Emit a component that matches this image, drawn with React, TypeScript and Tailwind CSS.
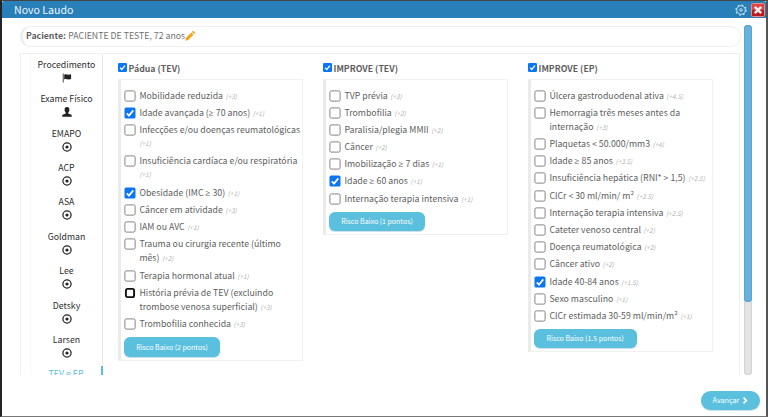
import React from 'react';

type Item = { lines: string[]; pts: string; on?: boolean; focus?: boolean; wrapPts?: boolean };
type Group = { title: string; items: Item[]; result: string; wide?: boolean };

const groups: Group[] = [
  {
    title: 'Pádua (TEV)',
    result: 'Risco Baixo (2 pontos)',
    items: [
      { lines: ['Mobilidade reduzida'], pts: '(+3)' },
      { lines: ['Idade avançada (≥ 70 anos)'], pts: '(+1)', on: true },
      { lines: ['Infecções e/ou doenças reumatológicas'], pts: '(+1)', wrapPts: true },
      { lines: ['Insuficiência cardíaca e/ou respiratória'], pts: '(+1)', wrapPts: true },
      { lines: ['Obesidade (IMC ≥ 30)'], pts: '(+1)', on: true },
      { lines: ['Câncer em atividade'], pts: '(+3)' },
      { lines: ['IAM ou AVC'], pts: '(+1)' },
      { lines: ['Trauma ou cirurgia recente (último', 'mês)'], pts: '(+2)' },
      { lines: ['Terapia hormonal atual'], pts: '(+1)' },
      { lines: ['História prévia de TEV (excluindo', 'trombose venosa superficial)'], pts: '(+3)', focus: true },
      { lines: ['Trombofilia conhecida'], pts: '(+3)' },
    ],
  },
  {
    title: 'IMPROVE (TEV)',
    result: 'Risco Baixo (1 pontos)',
    items: [
      { lines: ['TVP prévia'], pts: '(+3)' },
      { lines: ['Trombofilia'], pts: '(+2)' },
      { lines: ['Paralisia/plegia MMII'], pts: '(+2)' },
      { lines: ['Câncer'], pts: '(+2)' },
      { lines: ['Imobilização ≥ 7 dias'], pts: '(+1)' },
      { lines: ['Idade ≥ 60 anos'], pts: '(+1)', on: true },
      { lines: ['Internação terapia intensiva'], pts: '(+1)' },
    ],
  },
  {
    title: 'IMPROVE (EP)',
    result: 'Risco Baixo (1.5 pontos)',
    wide: true,
    items: [
      { lines: ['Úlcera gastroduodenal ativa'], pts: '(+4.5)' },
      { lines: ['Hemorragia três meses antes da', 'internação'], pts: '(+3)' },
      { lines: ['Plaquetas < 50.000/mm3'], pts: '(+4)' },
      { lines: ['Idade ≥ 85 anos'], pts: '(+3.5)' },
      { lines: ['Insuficiência hepática (RNI* > 1,5)'], pts: '(+2.5)' },
      { lines: ['ClCr < 30 ml/min/ m²'], pts: '(+2.5)' },
      { lines: ['Internação terapia intensiva'], pts: '(+2.5)' },
      { lines: ['Cateter venoso central'], pts: '(+2)' },
      { lines: ['Doença reumatológica'], pts: '(+2)' },
      { lines: ['Câncer ativo'], pts: '(+2)' },
      { lines: ['Idade 40-84 anos'], pts: '(+1.5)', on: true },
      { lines: ['Sexo masculino'], pts: '(+1)' },
      { lines: ['ClCr estimada 30-59 ml/min/m²'], pts: '(+1)' },
    ],
  },
];

const steps = ['Procedimento', 'Exame Físico', 'EMAPO', 'ACP', 'ASA', 'Goldman', 'Lee', 'Detsky', 'Larsen'];

function Check({ on, focus, small }: { on?: boolean; focus?: boolean; small?: boolean }) {
  return (
    <svg viewBox="0 0 12 12" className={small ? 'h-[9px] w-[9px] shrink-0' : 'h-3 w-3 shrink-0'}>
      {on ? (
        <>
          <rect x={small ? 0 : 0.5} y={small ? 0 : 0.5} width={small ? 12 : 11} height={small ? 12 : 11} rx="1.6" fill="#0a75f5" />
          <path d="M2.8 6.3 5 8.6 9.3 3.4" fill="none" stroke="#fff" strokeWidth="1.7" />
        </>
      ) : focus ? (
        <rect x="1.9" y="1.9" width="8.2" height="8.2" rx="1.6" fill="#fff" stroke="#111" strokeWidth="1.9" />
      ) : (
        <rect x="0.9" y="0.9" width="10.2" height="10.2" rx="1.5" fill="#fff" stroke="#777" strokeWidth="0.9" />
      )}
    </svg>
  );
}

function StepIcon({ index }: { index: number }) {
  if (index === 0)
    return (
      <svg viewBox="0 0 10 10" className="h-2.5 w-2.5" fill="#222">
        <path d="M.8.5h.8v9H.8zM2.2 1.7c2-1.3 3.4.9 6.9-.4v4.8c-3.5 1.3-4.9-.9-6.9.4z" />
      </svg>
    );
  if (index === 1)
    return (
      <svg viewBox="0 0 10 10" className="h-2.5 w-2.5" fill="#222">
        <path d="M5 .1c1.6 0 2.5 1.1 2.4 2.7 0 1.3-.6 2.2-1.1 2.8v1c.9.6 3.3.9 3.5 2.1v1H.2v-1c.2-1.2 2.6-1.5 3.5-2.1v-1C3.2 5 2.6 4.1 2.6 2.8 2.5 1.2 3.4.1 5 .1z" />
      </svg>
    );
  return (
    <svg viewBox="0 0 10 10" className="h-2.5 w-2.5">
      <circle cx="5" cy="5" r="4.1" fill="none" stroke="#222" strokeWidth="1.25" />
      <circle cx="5" cy="5" r="1.6" fill="#222" />
    </svg>
  );
}

/* The "≥" sign comes from a family that draws it with a flat foot. */
function Label({ text }: { text: string }) {
  const parts = text.split('≥');
  return (
    <>
      {parts[0]}
      {parts.length > 1 && (
        <>
          <span className="font-['Open_Sans',sans-serif] leading-none">≥</span>
          {parts[1]}
        </>
      )}
    </>
  );
}

function Panel({ g }: { g: Group }) {
  return (
    <section className="w-[185px] shrink-0">
      <div className="flex h-[17px] items-center">
        <Check on small />
        <span className="ml-[1.5px] pt-[2px] text-[8.75px] font-bold leading-[14px] text-[#606060]">{g.title}</span>
      </div>
      <div className="mt-[3px] rounded-[1px] border border-l-[3px] border-[#f0f0f0] border-l-[#ebebeb] pt-[8px] pb-[3px] pl-[3.4px]">
        {g.items.map((it) => (
          <div key={it.lines[0]} className={`flex ${it.lines.length > 1 || it.wrapPts ? 'h-[31.4px]' : 'h-[17.2px]'}`}>
            <div className="pt-[1.5px]">
              <Check on={it.on} focus={it.focus} />
            </div>
            <div className="ml-[3px] whitespace-nowrap pt-[0.5px] text-[8.78px] leading-[14.2px] text-[#606060]">
              {it.lines.map((line, i) => (
                <div key={line} className="h-[14.2px]">
                  <Label text={line} />
                  {i === it.lines.length - 1 && !it.wrapPts && (
                    <em className="ml-[2.5px] text-[6.4px] text-[#b0b0b0]">{it.pts}</em>
                  )}
                </div>
              ))}
              {it.wrapPts && <div className="h-[14.2px] text-[6.4px] italic text-[#b0b0b0]">{it.pts}</div>}
            </div>
          </div>
        ))}
        <div
          className={`mt-[3.3px] -ml-[0.4px] flex h-[19.5px] items-center justify-center rounded-[6px] bg-[#5bc0de] text-[7px] text-white shadow-[0_1px_1px_#c5dfe6] ${
            g.wide ? 'w-[102.5px]' : 'w-24'
          }`}
        >
          {g.result}
        </div>
      </div>
    </section>
  );
}

export default function App() {
  return (
    <div className="h-[417px] w-[768px] overflow-hidden border-t border-r-2 border-b border-l-2 border-t-[#454545] border-r-[#555] border-b-[#777] border-l-[#242229] bg-white font-['Noto_Sans_CJK_SC',sans-serif]">
      <header className="flex h-[17px] items-center justify-between rounded-t-[2px] bg-[#2980b9] pl-[12px] pr-px text-white">
        <h1 className="pb-px text-[10.6px] leading-[15px] text-[#eef6fb]">Novo Laudo</h1>
        <div className="flex items-center gap-1">
          <svg viewBox="0 0 12 12" className="h-3 w-3" fill="none" stroke="#d3e8f5">
            <circle cx="6" cy="6" r="4.3" strokeWidth="0.9" />
            <circle cx="6" cy="6" r="5.1" strokeWidth="1.1" strokeDasharray="1.7 2.305" />
            <circle cx="6" cy="6" r="1.3" strokeWidth="0.9" />
          </svg>
          <svg viewBox="0 0 14 14" className="h-[14px] w-[14px]">
            <rect x=".5" y=".5" width="13" height="13" rx="1" fill="#e04444" stroke="#e98b8b" />
            <rect x="1" y="7" width="12" height="6" fill="#b91a1a" />
            <path d="m3.8 3.8 6.4 6.4M10.2 3.8l-6.4 6.4" stroke="#eee" strokeWidth="2.5" />
          </svg>
        </div>
      </header>
      <main className="flex h-[357px] pt-[7px] pl-[18px]">
        <div className="flex h-[350px] w-[721px] flex-col overflow-hidden">
          <div className="mt-[1px] flex h-[21px] shrink-0 items-center rounded-[10px] border border-l-[3px] border-[#f0f0f0] border-l-[#ededed] pb-px pl-[3px] text-[8.75px] text-[#707070]">
            <b className="mr-[2.5px] text-[8.7px] text-[#606060]">Paciente:</b>PACIENTE DE TESTE, 72 anos
            <svg viewBox="0 0 10 10" className="h-2.5 w-2.5" fill="#f5a51b">
              <path d="m.2 9.8.8-3L6.3 1.5l2.2 2.2L3.2 9zM6.9.9l.6-.6c.4-.4.8-.4 1.2 0l1 1c.4.4.4.8 0 1.2l-.6.6z" />
            </svg>
          </div>
          <div className="mt-[6px] flex h-[600px] w-[720px] shrink-0 border border-[#f0f0f0]">
            <nav className="ml-[9px] w-[73px] shrink-0 border-r border-l border-r-[#e8e8e8] border-l-[#f8f8f8] pt-[2.9px] text-center text-[8.75px] text-[#2c2c2c]">
              {steps.map((s, i) => (
                <div key={s} className="flex h-[34.4px] flex-col items-center">
                  <span className="leading-4">{s}</span>
                  <StepIcon index={i} />
                </div>
              ))}
              <div className="-mr-px h-[34px] border-r-2 border-[#5bc0de] leading-4 text-[#5bc0de]">TEV e EP</div>
            </nav>
            <div className="flex gap-5 pt-[5px] pl-[15px]">
              {groups.map((g) => (
                <Panel key={g.title} g={g} />
              ))}
            </div>
          </div>
        </div>
        <div className="ml-[3px] h-[350px] w-2 rounded-full bg-[#e4e4e4] shadow-[inset_0_0_2px_#aaa]">
          <div className="h-[277px] rounded-full bg-[#68b3de] shadow-[inset_0_0_2px_#2f83b5]" />
        </div>
      </main>
      <footer className="flex justify-end pt-4 pr-[6px]">
        <button className="flex h-[19px] w-[59px] items-center justify-center gap-[3px] rounded-full bg-[#5bc0de] text-[7.2px] text-white shadow-[0_1px_1px_#c5dfe6]">
          Avançar
          <svg viewBox="0 0 6 8" className="h-[7px] w-[6px]" fill="none" stroke="#fff" strokeWidth="1.9">
            <path d="m1.3.8 3.2 3.2-3.2 3.2" />
          </svg>
        </button>
      </footer>
    </div>
  );
}
